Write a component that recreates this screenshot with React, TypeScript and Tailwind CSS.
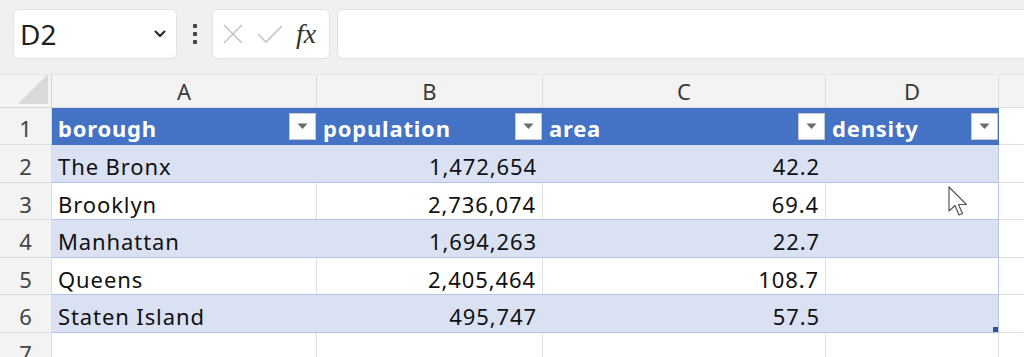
import React from "react";

const font = { fontFamily: '"Noto Sans", "Open Sans", sans-serif' };

const rows = [
  ["The Bronx", "1,472,654", "42.2"],
  ["Brooklyn", "2,736,074", "69.4"],
  ["Manhattan", "1,694,263", "22.7"],
  ["Queens", "2,405,464", "108.7"],
  ["Staten Island", "495,747", "57.5"],
];

const heights = ["h-[38px]", "h-[37px]", "h-[38px]", "h-[37px]", "h-[38px]"];

function Drop() {
  return (
    <div className="w-[27px] h-[27px] bg-white border border-[#c8c8c8] flex items-center justify-center shrink-0">
      <svg width="11" height="7" viewBox="0 0 11 7">
        <path d="M0.5 0.5 L10.5 0.5 L5.5 6 Z" fill="#6b6b6b" />
      </svg>
    </div>
  );
}

function HeadCell({ label, w }: { label: string; w: string }) {
  return (
    <div className={`${w} h-full bg-[#4472c4] flex items-center justify-between pl-[6px] pr-[1px]`}>
      <span className="text-white font-bold text-[22px] tracking-[0.8px] leading-none pt-[3px]">{label}</span>
      <Drop />
    </div>
  );
}

export default function App() {
  return (
    <div className="w-[1024px] h-[357px] overflow-hidden bg-[#f0f0f0] relative" style={font}>
      {/* toolbar */}
      <div className="h-[74px] flex items-start pt-[9px] pl-[13px] gap-0">
        <div className="w-[164px] h-[50px] bg-white rounded-[6px] border border-[#e2e2e2] flex items-center justify-between pl-[6px] pr-[10px]">
          <span className="text-[28px] text-[#1f1f1f] leading-none">D2</span>
          <svg width="12" height="8" viewBox="0 0 12 8">
            <path d="M1.5 1.5 L6 6 L10.5 1.5" stroke="#222" strokeWidth="2" fill="none" strokeLinecap="round" strokeLinejoin="round" />
          </svg>
        </div>
        <div className="w-[35px] h-[50px] flex flex-col items-center justify-center gap-[4px]">
          <div className="w-[4px] h-[4px] bg-[#444] rounded-[1px]" />
          <div className="w-[4px] h-[4px] bg-[#444] rounded-[1px]" />
          <div className="w-[4px] h-[4px] bg-[#444] rounded-[1px]" />
        </div>
        <div className="w-[118px] h-[50px] bg-white rounded-[6px] border border-[#e2e2e2] flex items-center pl-[9px] gap-[13px]">
          <svg width="22" height="22" viewBox="0 0 22 22">
            <path d="M2 2 L20 20 M20 2 L2 20" stroke="#c4c4c4" strokeWidth="1.6" />
          </svg>
          <svg width="26" height="20" viewBox="0 0 26 20">
            <path d="M1 10 L9 18 L25 2" stroke="#c4c4c4" strokeWidth="1.6" fill="none" />
          </svg>
          <span className="text-[28px] italic text-[#333] leading-none" style={{ fontFamily: '"Liberation Serif", serif' }}>
            fx
          </span>
        </div>
        <div className="ml-[7px] flex-1 h-[50px] bg-white rounded-l-[6px] border border-r-0 border-[#e2e2e2]" />
      </div>

      {/* column headers */}
      <div className="h-[34px] flex border-t border-[#e6e6e6] bg-[#f3f3f3] text-[#3a3a3a] text-[22px]">
        <div className="w-[52px] h-full border-r border-b border-[#d4d4d4] relative">
          <svg className="absolute right-[3px] bottom-[3px]" width="30" height="30" viewBox="0 0 30 30">
            <path d="M30 0 L30 30 L0 30 Z" fill="#d9d9d9" />
          </svg>
        </div>
        <div className="w-[265px] flex items-center justify-center border-r border-b border-[#dcdcdc]">A</div>
        <div className="w-[226px] flex items-center justify-center border-r border-b border-[#dcdcdc]">B</div>
        <div className="w-[283px] flex items-center justify-center border-r border-b border-[#dcdcdc]">C</div>
        <div className="w-[173px] flex items-center justify-center border-r border-b border-[#dcdcdc]">D</div>
        <div className="flex-1 border-b border-[#dcdcdc]" />
      </div>

      {/* header row 1 */}
      <div className="h-[37px] flex">
        <div className="w-[52px] h-full bg-[#f3f3f3] border-r border-b border-[#dcdcdc] flex items-center justify-center text-[22px] text-[#444] pt-[5px]">1</div>
        <div className="w-[947px] h-full flex border-b border-[#4472c4]">
          <HeadCell label="borough" w="w-[265px]" />
          <HeadCell label="population" w="w-[226px]" />
          <HeadCell label="area" w="w-[283px]" />
          <HeadCell label="density" w="w-[173px]" />
        </div>
        <div className="flex-1 bg-white border-b border-[#e1e1e1]" />
      </div>

      {rows.map((r, i) => {
        const band = i % 2 === 0;
        const bg = band ? "bg-[#d9e1f2]" : "bg-white";
        const vline = band ? "" : "border-r border-[#e1e1e1]";
        return (
          <div key={i} className={`${heights[i]} flex text-[22px] text-[#111]`}>
            <div className="w-[52px] h-full bg-[#f3f3f3] border-r border-b border-[#dcdcdc] flex items-center justify-center text-[#444] pt-[6px]">
              {i + 2}
            </div>
            <div className={`w-[947px] h-full flex border-b border-r border-[#b4c6e7] ${bg} relative tracking-[0.9px]`}>
              <div className={`w-[265px] h-full flex items-center pl-[6px] pt-[6px] ${vline}`}>{r[0]}</div>
              <div className={`w-[226px] h-full flex items-center justify-end pr-[6px] pt-[6px] ${vline}`}>{r[1]}</div>
              <div className={`w-[283px] h-full flex items-center justify-end pr-[6px] pt-[6px] ${vline}`}>{r[2]}</div>
              <div className="flex-1 h-full" />
              {i === 4 && <div className="absolute right-[0px] bottom-[0px] w-[5px] h-[5px] bg-[#2f5597]" />}
            </div>
            <div className="flex-1 bg-white border-b border-[#e1e1e1]" />
          </div>
        );
      })}

      {/* row 7 */}
      <div className="h-[30px] flex text-[22px]">
        <div className="w-[52px] h-full bg-[#f3f3f3] border-r border-[#dcdcdc] flex items-start pt-[4px] justify-center text-[#444]">7</div>
        <div className="w-[265px] h-full bg-white border-r border-[#e1e1e1]" />
        <div className="w-[226px] h-full bg-white border-r border-[#e1e1e1]" />
        <div className="w-[283px] h-full bg-white border-r border-[#e1e1e1]" />
        <div className="w-[173px] h-full bg-white border-r border-[#e1e1e1]" />
        <div className="flex-1 bg-white" />
      </div>

      {/* mouse cursor */}
      <svg className="absolute left-[948px] top-[186px]" width="24" height="34" viewBox="0 0 24 34">
        <path d="M1 1 L1 25 L7 19.5 L11 29 L14.5 27.5 L10.5 18.5 L18.5 18.5 Z" fill="#fff" stroke="#555" strokeWidth="1.2" strokeLinejoin="round" />
      </svg>
    </div>
  );
}
